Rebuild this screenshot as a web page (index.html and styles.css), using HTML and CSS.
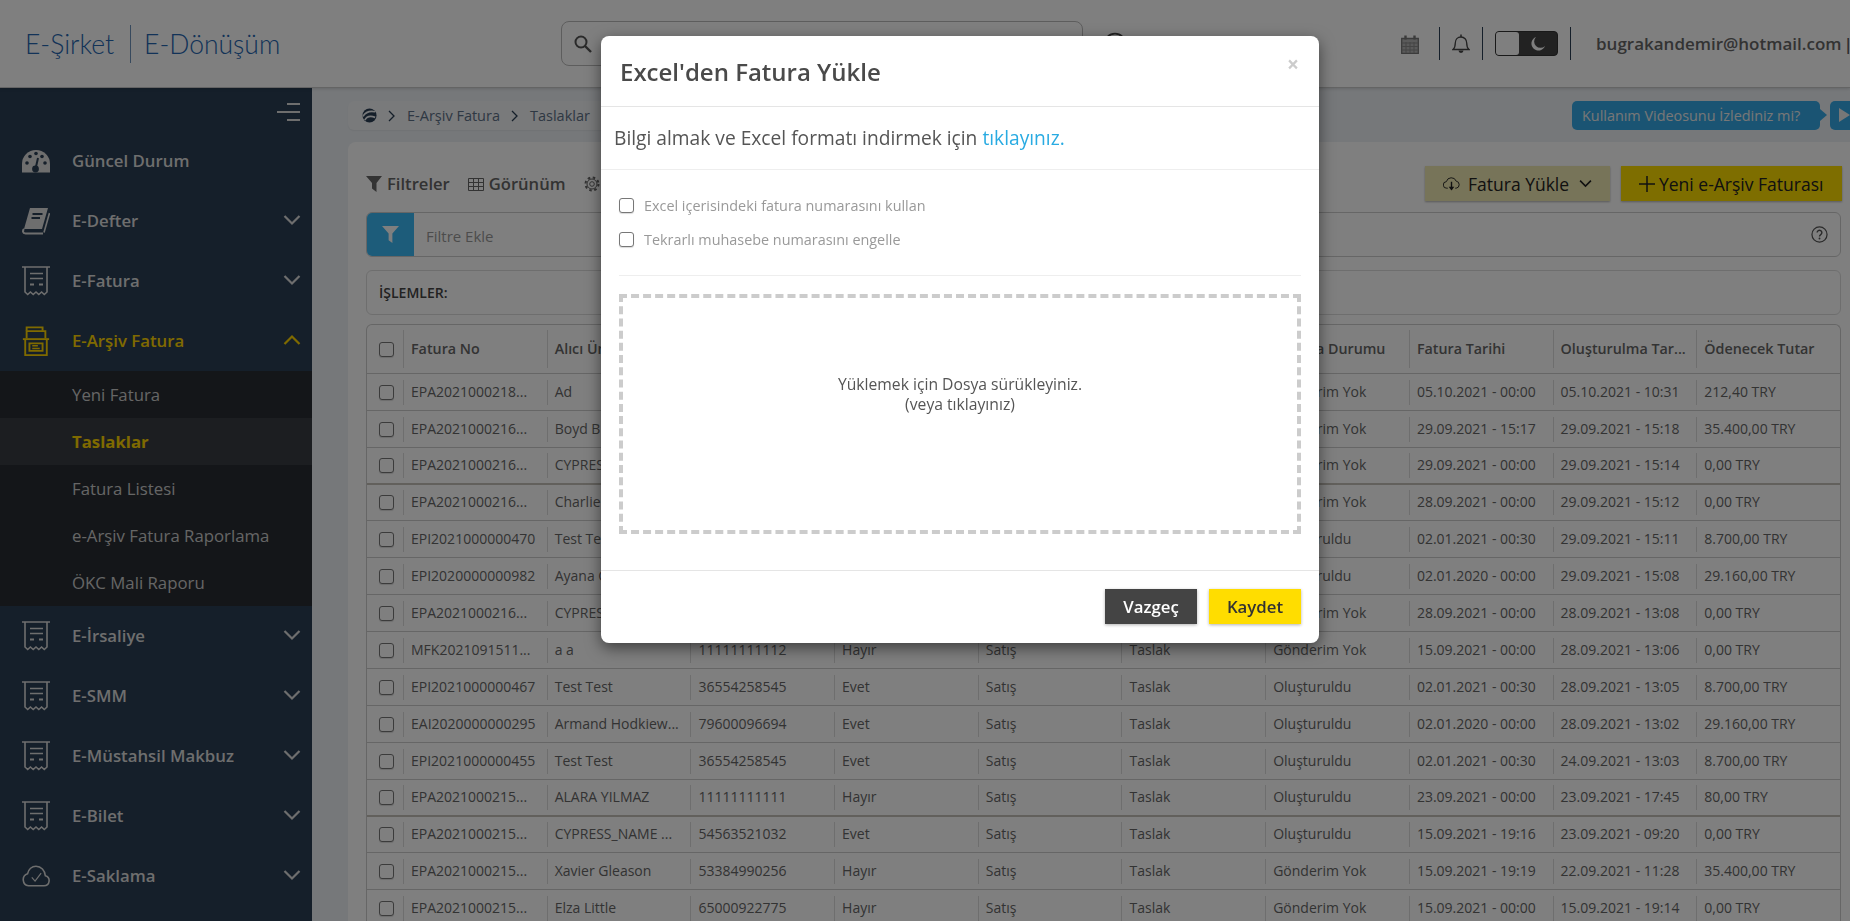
FILE: index.html
```html
<!DOCTYPE html>
<html lang="tr">
<head>
  <meta charset="UTF-8">
  <title>E-Arşiv Fatura - Taslaklar</title>
  <link rel="stylesheet" href="styles.css">
</head>
<body>

<svg class="defs" width="0" height="0">
  <symbol id="receipt" viewBox="0 0 28 30">
    <path d="M0 1h28M3 1v25l2.7 2.5 2.7-2.5 2.8 2.5 2.8-2.5 2.8 2.5 2.8-2.5 2.7 2.5 2.7-2.5V1" fill="none" stroke="currentColor" stroke-width="1.6"/>
    <path d="M8 7.500h13M8 12.500h13" fill="none" stroke="currentColor" stroke-width="1.6"/>
    <path d="M8 18.500h4M17 18.500h4" fill="none" stroke="currentColor" stroke-width="2"/>
  </symbol>
  <symbol id="chev-down" viewBox="0 0 18 12">
    <path d="M1.500 2l7.500 7.500L16.500 2" fill="none" stroke="currentColor" stroke-width="2.200"/>
  </symbol>
</svg>

<header class="topbar">
  <div class="logo">
    <span class="logo-part">E-Şirket</span>
    <span class="logo-part logo-second">E-Dönüşüm</span>
  </div>
  <div class="search">
    <svg class="search-icon" viewBox="0 0 20 20" width="20" height="20"><circle cx="8" cy="8" r="5.500" fill="none" stroke="currentColor" stroke-width="2"/><path d="M12 12l6 6" stroke="currentColor" stroke-width="2.400"/></svg>
  </div>
  <svg class="search-help" viewBox="0 0 22 22" width="24" height="24"><circle cx="11" cy="11" r="9.500" fill="none" stroke="currentColor" stroke-width="1.500"/></svg>
  <div class="top-right">
    <svg class="top-icon calendar" viewBox="0 0 18 20" width="18" height="20"><path d="M.7 4.500h16.600v14.800H.7z" fill="#b4b4b4" stroke="#777" stroke-width="1.300"/><path d="M4.500 1.500v4M13.500 1.500v4" stroke="#777" stroke-width="2.400"/><path d="M1 9h16M1 12.500h16M1 16h16M5 8v11M9 8v11M13 8v11" stroke="#8a8a8a" stroke-width="1"/></svg>
    <span class="top-sep"></span>
    <svg class="top-icon bell" viewBox="0 0 18 20" width="18" height="20"><path d="M1 15.500c1.800-1.500 2.300-3 2.300-6.500 0-3.400 2.300-6 5.700-6s5.700 2.600 5.700 6c0 3.500.5 5 2.300 6.500z" fill="none" stroke="currentColor" stroke-width="1.300"/><path d="M9 .5v2.500" stroke="currentColor" stroke-width="1.500"/><path d="M6.500 16.500a2.500 2.500 0 0 0 5 0z" fill="currentColor"/></svg>
    <span class="top-sep"></span>
    <div class="toggle">
      <span class="toggle-knob"></span>
      <span class="toggle-dark">
        <svg viewBox="0 0 16 16" width="16" height="16"><path d="M6 1a7 7 0 1 0 9 9 6 6 0 0 1-9-9z" fill="#fff"/></svg>
      </span>
    </div>
    <span class="top-sep top-sep-last"></span>
    <span class="user-mail">bugrakandemir@hotmail.com</span><span class="user-rest">|</span>
  </div>
</header>

<div class="main">
  <nav class="sidebar">
    <div class="side-toggle"><span></span><span></span><span></span></div>

    <a class="nav-item">
      <svg class="nav-icon" viewBox="0 0 28 24" width="28" height="24"><path d="M0 23.500V15a14 14 0 0 1 28 0v8.500z" fill="currentColor"/><g fill="#2a3e54"><circle cx="5" cy="14" r="1.800"/><circle cx="8" cy="7.500" r="1.800"/><circle cx="14" cy="4.500" r="1.800"/><circle cx="20" cy="7.500" r="1.800"/><circle cx="23" cy="14" r="1.800"/><circle cx="13.500" cy="20" r="3.400"/></g><path d="M13.500 20l2.500-11" stroke="#2a3e54" stroke-width="2"/></svg>
      <span>Güncel Durum</span>
    </a>
    <a class="nav-item">
      <svg class="nav-icon" viewBox="0 0 28 28" width="28" height="28"><path d="M8 1h18l-6 21H2z" fill="currentColor"/><path d="M10.500 7h10M9.500 11h8.500" stroke="#2a3e54" stroke-width="2"/><path d="M2 22c-1.500 1.500-1.500 4.500 1.500 4.500H21" fill="none" stroke="currentColor" stroke-width="2"/><path d="M27.500 6l-5.500 19.500" fill="none" stroke="currentColor" stroke-width="1.600"/></svg>
      <span>E-Defter</span>
      <svg class="nav-chev"><use href="#chev-down"/></svg>
    </a>
    <a class="nav-item">
      <svg class="nav-icon"><use href="#receipt"/></svg>
      <span>E-Fatura</span>
      <svg class="nav-chev"><use href="#chev-down"/></svg>
    </a>
    <a class="nav-item nav-open">
      <svg class="nav-icon" viewBox="0 0 28 32" width="28" height="32"><g fill="none" stroke="currentColor" stroke-width="2"><path d="M4 5V1.500h17V5"/><path d="M4 13V5.500h20V13"/><path d="M0 14h28"/><path d="M2.500 14v17h23V14"/><path d="M7 18.500h14v8H7z"/><path d="M10 21h6M10 24h8" stroke-width="1.500"/></g></svg>
      <span>E-Arşiv Fatura</span>
      <svg class="nav-chev chev-up"><use href="#chev-down"/></svg>
    </a>
    <div class="submenu">
      <a class="sub-item">Yeni Fatura</a>
      <a class="sub-item sub-active">Taslaklar</a>
      <a class="sub-item">Fatura Listesi</a>
      <a class="sub-item">e-Arşiv Fatura Raporlama</a>
      <a class="sub-item">ÖKC Mali Raporu</a>
    </div>
    <a class="nav-item">
      <svg class="nav-icon"><use href="#receipt"/></svg>
      <span>E-İrsaliye</span>
      <svg class="nav-chev"><use href="#chev-down"/></svg>
    </a>
    <a class="nav-item">
      <svg class="nav-icon"><use href="#receipt"/></svg>
      <span>E-SMM</span>
      <svg class="nav-chev"><use href="#chev-down"/></svg>
    </a>
    <a class="nav-item">
      <svg class="nav-icon"><use href="#receipt"/></svg>
      <span>E-Müstahsil Makbuz</span>
      <svg class="nav-chev"><use href="#chev-down"/></svg>
    </a>
    <a class="nav-item">
      <svg class="nav-icon"><use href="#receipt"/></svg>
      <span>E-Bilet</span>
      <svg class="nav-chev"><use href="#chev-down"/></svg>
    </a>
    <a class="nav-item">
      <svg class="nav-icon" viewBox="0 0 30 24" width="30" height="24"><path d="M7 22.500h16.500a5.500 5.500 0 0 0 1.500-10.800C24.500 6 20.500 1.500 15 1.500 10.500 1.500 7 5 6 9.500a6.700 6.700 0 0 0 1 13z" fill="none" stroke="currentColor" stroke-width="1.700"/><path d="M10.500 13.500l3.500 4 6.500-8.500" fill="none" stroke="currentColor" stroke-width="1.300"/></svg>
      <span>E-Saklama</span>
      <svg class="nav-chev"><use href="#chev-down"/></svg>
    </a>
  </nav>

  <main class="content">
    <div class="crumb-row">
      <div class="crumbs">
        <svg class="crumb-logo" viewBox="0 0 16 16" width="15" height="15"><circle cx="8" cy="8" r="7.500" fill="currentColor"/><path d="M1 9c3-5 8-6 13-5M3 13c2-4 6-5 11-3" fill="none" stroke="#f2f4f7" stroke-width="1.800"/></svg>
        <svg class="crumb-chev" viewBox="0 0 8 12" width="8" height="12"><path d="M1 1l5 5-5 5" fill="none" stroke="currentColor" stroke-width="1.300"/></svg>
        <span>E-Arşiv Fatura</span>
        <svg class="crumb-chev" viewBox="0 0 8 12" width="8" height="12"><path d="M1 1l5 5-5 5" fill="none" stroke="currentColor" stroke-width="1.300"/></svg>
        <span>Taslaklar</span>
      </div>
      <div class="video-hint">
        <span class="video-text">Kullanım Videosunu İzlediniz mi?</span>
        <span class="video-play"></span>
      </div>
    </div>

    <section class="card">
      <div class="toolbar">
        <div class="tool">
          <svg viewBox="0 0 16 16" width="16" height="16"><path d="M0 0h16l-5.500 7v9l-4.500-3.500V7z" fill="currentColor"/></svg>
          <span>Filtreler</span>
        </div>
        <div class="tool">
          <svg viewBox="0 0 16 14" width="16" height="14"><path d="M.5 1.500h15v12H.5zM.5 5.500h15M.5 9.500h15M5.500 1.500v12M10.500 1.500v12" fill="none" stroke="currentColor"/></svg>
          <span>Görünüm</span>
        </div>
        <div class="tool">
          <svg viewBox="0 0 16 16" width="16" height="16"><circle cx="8" cy="8" r="2.300" fill="none" stroke="currentColor"/><circle cx="8" cy="8" r="5" fill="none" stroke="currentColor"/><circle cx="8" cy="8" r="6.500" fill="none" stroke="currentColor" stroke-width="2" stroke-dasharray="2.550 2.550"/></svg>
        </div>
        <div class="tool-buttons">
          <a class="btn-upload">
            <svg viewBox="0 0 18 16" width="17" height="15"><path d="M5 13H4a3.500 3.500 0 0 1-.5-7A5.500 5.500 0 0 1 14 5.500a3.800 3.800 0 0 1 0 7.500h-1" fill="none" stroke="currentColor"/><path d="M9 6v8" stroke="currentColor" stroke-width="1.500"/><path d="M6 11.500h6L9 15.500z" fill="currentColor"/></svg>
            <span>Fatura Yükle</span>
            <svg class="upload-chev"><use href="#chev-down"/></svg>
          </a>
          <a class="btn-new">
            <svg viewBox="0 0 16 16" width="16" height="16"><path d="M8 0v16M0 8h16" stroke="currentColor" stroke-width="1.500"/></svg>
            <span>Yeni e-Arşiv Faturası</span>
          </a>
        </div>
      </div>

      <div class="filter-bar">
        <span class="filter-btn">
          <svg viewBox="0 0 18 20" width="17" height="19"><path d="M0 1h18L11 9v10l-4-3V9z" fill="#fff"/></svg>
        </span>
        <span class="filter-hint">Filtre Ekle</span>
        <svg class="filter-help" viewBox="0 0 18 18" width="17" height="17"><circle cx="9" cy="9" r="8" fill="none" stroke="currentColor" stroke-width="1.300"/><path d="M6.500 7a2.500 2.500 0 1 1 3.800 2.100c-.9.600-1.300 1-1.300 2" fill="none" stroke="currentColor" stroke-width="1.500"/><circle cx="9" cy="13.300" r="1" fill="currentColor"/></svg>
      </div>

      <div class="actions-bar">İŞLEMLER:</div>

      <div class="grid">
        <div class="row row-head">
          <div class="cell-check"><input type="checkbox"></div>
          <div class="cell">Fatura No</div><div class="cell">Alıcı Ünvanı</div><div class="cell">VKN/TCKN</div><div class="cell">E-Fatura</div><div class="cell">Tipi</div><div class="cell">Durum</div><div class="cell">E-Posta Durumu</div><div class="cell">Fatura Tarihi</div><div class="cell">Oluşturulma Tar...</div><div class="cell">Ödenecek Tutar</div>
        </div>
        <div class="row">
          <div class="cell-check"><input type="checkbox"></div>
          <div class="cell">EPA2021000218...</div><div class="cell">Ad</div><div class="cell">11111111111</div><div class="cell">Hayır</div><div class="cell">Satış</div><div class="cell">Taslak</div><div class="cell">Gönderim Yok</div><div class="cell">05.10.2021 - 00:00</div><div class="cell">05.10.2021 - 10:31</div><div class="cell">212,40 TRY</div>
        </div>
        <div class="row">
          <div class="cell-check"><input type="checkbox"></div>
          <div class="cell">EPA2021000216...</div><div class="cell">Boyd Brown</div><div class="cell">53384990256</div><div class="cell">Hayır</div><div class="cell">Satış</div><div class="cell">Taslak</div><div class="cell">Gönderim Yok</div><div class="cell">29.09.2021 - 15:17</div><div class="cell">29.09.2021 - 15:18</div><div class="cell">35.400,00 TRY</div>
        </div>
        <div class="row row-thick">
          <div class="cell-check"><input type="checkbox"></div>
          <div class="cell">EPA2021000216...</div><div class="cell">CYPRESS_NAME ...</div><div class="cell">54563521032</div><div class="cell">Evet</div><div class="cell">Satış</div><div class="cell">Taslak</div><div class="cell">Gönderim Yok</div><div class="cell">29.09.2021 - 00:00</div><div class="cell">29.09.2021 - 15:14</div><div class="cell">0,00 TRY</div>
        </div>
        <div class="row">
          <div class="cell-check"><input type="checkbox"></div>
          <div class="cell">EPA2021000216...</div><div class="cell">Charlie Hills</div><div class="cell">65000922775</div><div class="cell">Hayır</div><div class="cell">Satış</div><div class="cell">Taslak</div><div class="cell">Gönderim Yok</div><div class="cell">28.09.2021 - 00:00</div><div class="cell">29.09.2021 - 15:12</div><div class="cell">0,00 TRY</div>
        </div>
        <div class="row">
          <div class="cell-check"><input type="checkbox"></div>
          <div class="cell">EPI2021000000470</div><div class="cell">Test Test</div><div class="cell">36554258545</div><div class="cell">Evet</div><div class="cell">Satış</div><div class="cell">Taslak</div><div class="cell">Oluşturuldu</div><div class="cell">02.01.2021 - 00:30</div><div class="cell">29.09.2021 - 15:11</div><div class="cell">8.700,00 TRY</div>
        </div>
        <div class="row">
          <div class="cell-check"><input type="checkbox"></div>
          <div class="cell">EPI2020000000982</div><div class="cell">Ayana Orn</div><div class="cell">79600096694</div><div class="cell">Evet</div><div class="cell">Satış</div><div class="cell">Taslak</div><div class="cell">Oluşturuldu</div><div class="cell">02.01.2020 - 00:00</div><div class="cell">29.09.2021 - 15:08</div><div class="cell">29.160,00 TRY</div>
        </div>
        <div class="row">
          <div class="cell-check"><input type="checkbox"></div>
          <div class="cell">EPA2021000216...</div><div class="cell">CYPRESS_NAME ...</div><div class="cell">54563521032</div><div class="cell">Evet</div><div class="cell">Satış</div><div class="cell">Taslak</div><div class="cell">Gönderim Yok</div><div class="cell">28.09.2021 - 00:00</div><div class="cell">28.09.2021 - 13:08</div><div class="cell">0,00 TRY</div>
        </div>
        <div class="row">
          <div class="cell-check"><input type="checkbox"></div>
          <div class="cell">MFK2021091511...</div><div class="cell">a a</div><div class="cell">11111111112</div><div class="cell">Hayır</div><div class="cell">Satış</div><div class="cell">Taslak</div><div class="cell">Gönderim Yok</div><div class="cell">15.09.2021 - 00:00</div><div class="cell">28.09.2021 - 13:06</div><div class="cell">0,00 TRY</div>
        </div>
        <div class="row">
          <div class="cell-check"><input type="checkbox"></div>
          <div class="cell">EPI2021000000467</div><div class="cell">Test Test</div><div class="cell">36554258545</div><div class="cell">Evet</div><div class="cell">Satış</div><div class="cell">Taslak</div><div class="cell">Oluşturuldu</div><div class="cell">02.01.2021 - 00:30</div><div class="cell">28.09.2021 - 13:05</div><div class="cell">8.700,00 TRY</div>
        </div>
        <div class="row">
          <div class="cell-check"><input type="checkbox"></div>
          <div class="cell">EAI2020000000295</div><div class="cell">Armand Hodkiew...</div><div class="cell">79600096694</div><div class="cell">Evet</div><div class="cell">Satış</div><div class="cell">Taslak</div><div class="cell">Oluşturuldu</div><div class="cell">02.01.2020 - 00:00</div><div class="cell">28.09.2021 - 13:02</div><div class="cell">29.160,00 TRY</div>
        </div>
        <div class="row">
          <div class="cell-check"><input type="checkbox"></div>
          <div class="cell">EPI2021000000455</div><div class="cell">Test Test</div><div class="cell">36554258545</div><div class="cell">Evet</div><div class="cell">Satış</div><div class="cell">Taslak</div><div class="cell">Oluşturuldu</div><div class="cell">02.01.2021 - 00:30</div><div class="cell">24.09.2021 - 13:03</div><div class="cell">8.700,00 TRY</div>
        </div>
        <div class="row row-thick">
          <div class="cell-check"><input type="checkbox"></div>
          <div class="cell">EPA2021000215...</div><div class="cell">ALARA YILMAZ</div><div class="cell">11111111111</div><div class="cell">Hayır</div><div class="cell">Satış</div><div class="cell">Taslak</div><div class="cell">Oluşturuldu</div><div class="cell">23.09.2021 - 00:00</div><div class="cell">23.09.2021 - 17:45</div><div class="cell">80,00 TRY</div>
        </div>
        <div class="row">
          <div class="cell-check"><input type="checkbox"></div>
          <div class="cell">EPA2021000215...</div><div class="cell">CYPRESS_NAME ...</div><div class="cell">54563521032</div><div class="cell">Evet</div><div class="cell">Satış</div><div class="cell">Taslak</div><div class="cell">Oluşturuldu</div><div class="cell">15.09.2021 - 19:16</div><div class="cell">23.09.2021 - 09:20</div><div class="cell">0,00 TRY</div>
        </div>
        <div class="row">
          <div class="cell-check"><input type="checkbox"></div>
          <div class="cell">EPA2021000215...</div><div class="cell">Xavier Gleason</div><div class="cell">53384990256</div><div class="cell">Hayır</div><div class="cell">Satış</div><div class="cell">Taslak</div><div class="cell">Gönderim Yok</div><div class="cell">15.09.2021 - 19:19</div><div class="cell">22.09.2021 - 11:28</div><div class="cell">35.400,00 TRY</div>
        </div>
        <div class="row">
          <div class="cell-check"><input type="checkbox"></div>
          <div class="cell">EPA2021000215...</div><div class="cell">Elza Little</div><div class="cell">65000922775</div><div class="cell">Hayır</div><div class="cell">Satış</div><div class="cell">Taslak</div><div class="cell">Gönderim Yok</div><div class="cell">15.09.2021 - 00:00</div><div class="cell">15.09.2021 - 19:14</div><div class="cell">0,00 TRY</div>
        </div>
      </div>
    </section>
  </main>
</div>

<div class="backdrop"></div>

<div class="modal">
  <div class="modal-head">
    <h2>Excel'den Fatura Yükle</h2>
    <span class="modal-close">×</span>
  </div>
  <div class="modal-info">Bilgi almak ve Excel formatı indirmek için <a class="link">tıklayınız.</a></div>
  <div class="modal-body">
    <label class="check-row"><input type="checkbox"> Excel içerisindeki fatura numarasını kullan</label>
    <label class="check-row"><input type="checkbox"> Tekrarlı muhasebe numarasını engelle</label>
    <hr class="modal-rule">
    <div class="dropzone">
      <div>Yüklemek için Dosya sürükleyiniz.</div>
      <div>(veya tıklayınız)</div>
    </div>
  </div>
  <div class="modal-foot">
    <button class="btn-cancel">Vazgeç</button>
    <button class="btn-save">Kaydet</button>
  </div>
</div>

</body>
</html>
```

FILE: styles.css
```css
html, body {
  margin: 0;
  padding: 0;
  height: 921px;
  overflow: hidden;
}
body {
  font-family: "Open Sans", "Liberation Sans", sans-serif;
  font-size: 14px;
  color: #666;
  background: #edf1f5;
}
.defs {
  position: absolute;
}
input[type=checkbox] {
  appearance: none;
  -webkit-appearance: none;
  width: 15px;
  height: 15px;
  margin: 0;
  flex: none;
  background: #fff;
  border: 1px solid #777;
  border-radius: 3px;
  box-shadow: 0 1px 1px rgba(0,0,0,.15);
}

/* top bar */
.topbar {
  height: 88px;
  box-sizing: border-box;
  display: flex;
  align-items: center;
  padding-left: 25px;
  background: #fff;
  border-bottom: 1px solid #c9c9c9;
  box-shadow: 0 1px 3px rgba(0,0,0,.15);
  position: relative;
  z-index: 2;
}
.logo {
  width: 536px;
  display: flex;
  align-items: center;
  font-family: "Lato", sans-serif;
  font-weight: 300;
  font-size: 26.5px;
  color: #2566b0;
}
.logo-second {
  margin-left: 16px;
  padding-left: 13px;
  border-left: 1px solid #6f93ba;
  line-height: 38px;
}
.search {
  width: 522px;
  height: 45px;
  box-sizing: border-box;
  border: 1px solid #bbb;
  border-radius: 8px;
  display: flex;
  align-items: center;
  padding-left: 11px;
  color: #555;
}
.search-help {
  margin-left: 20px;
  color: #444;
}
.top-right {
  margin-left: auto;
  display: flex;
  align-items: center;
  white-space: nowrap;
  overflow: hidden;
  width: 449px;
  color: #555;
}
.top-right > * {
  flex: none;
}
.top-sep {
  width: 1px;
  height: 33px;
  background: #2a3e54;
  margin: 0 12px;
}
.calendar {
  margin-right: 8px;
}
.bell {
  color: #444;
}
.toggle {
  width: 63px;
  height: 25px;
  box-sizing: border-box;
  display: flex;
  border: 1px solid #333;
  border-radius: 4px;
  background: #444;
}
.toggle-knob {
  width: 23px;
  background: #fff;
  border-radius: 3px;
}
.toggle-dark {
  flex: 1;
  display: flex;
  align-items: center;
  justify-content: center;
}
.top-sep-last {
  margin: 0 25px 0 12px;
}
.user-mail {
  font-size: 17px;
  font-weight: 600;
  color: #666;
}
.user-rest {
  font-size: 17px;
  font-weight: 600;
  margin-left: 2px;
}

/* layout */
.main {
  display: flex;
  height: 833px;
}

/* sidebar */
.sidebar {
  width: 312px;
  flex: none;
  background: #2a3e54;
  color: #ddd;
}
.side-toggle {
  height: 43px;
  box-sizing: border-box;
  padding: 15px 12px 0 0;
  display: flex;
  flex-direction: column;
  align-items: flex-end;
  gap: 6px;
}
.side-toggle span {
  display: block;
  height: 2px;
  width: 13px;
  background: #ddd;
}
.side-toggle span:nth-child(2) {
  width: 23px;
}
.nav-item {
  height: 60px;
  display: flex;
  align-items: center;
  padding: 0 11px 0 22px;
  font-size: 16.8px;
  font-weight: 600;
}
.nav-item span {
  padding-bottom: 2px;
}
.nav-icon {
  width: 28px;
  height: 30px;
  margin-right: 22px;
  flex: none;
}
.nav-chev {
  width: 18px;
  height: 12px;
  margin-left: auto;
  margin-top: -2px;
}
.chev-up {
  transform: rotate(180deg);
}
.nav-open {
  color: #ffd500;
}
.submenu {
  background: #282c32;
}
.sub-item {
  display: block;
  height: 47px;
  line-height: 47px;
  padding-left: 72px;
  font-size: 16.8px;
  color: #ccc;
}
.sub-active {
  background: #383c42;
  color: #ffd500;
  font-weight: 700;
}

/* content */
.content {
  flex: 1;
  min-width: 0;
  padding: 13px 0 0 36px;
}
.crumb-row {
  height: 29px;
  display: flex;
  justify-content: space-between;
}
.crumbs {
  width: 300px;
  display: flex;
  align-items: center;
  gap: 11px;
  padding-left: 14px;
  background: #f2f4f7;
  border-radius: 6px;
  font-size: 14.5px;
  color: #5d7086;
  box-shadow: 0 1px 2px rgba(0,0,0,.06);
}
.crumb-logo {
  color: #2a3e54;
}
.crumb-chev {
  flex: none;
  color: #2a3e54;
}
.video-hint {
  display: flex;
  width: 278px;
  gap: 10px;
}
.video-text {
  width: 248px;
  box-sizing: border-box;
  padding-left: 10px;
  line-height: 29px;
  font-size: 14.4px;
  background: #34a9e6;
  color: #eee;
  border-radius: 5px;
  position: relative;
}
.video-text::after {
  content: "";
  position: absolute;
  right: -7px;
  top: 8px;
  border-left: 7px solid #34a9e6;
  border-top: 6px solid transparent;
  border-bottom: 6px solid transparent;
}
.video-play {
  flex: 1;
  background: #34a9e6;
  border-radius: 5px 0 0 5px;
  position: relative;
}
.video-play::after {
  content: "";
  position: absolute;
  left: 9px;
  top: 7px;
  border-left: 11px solid #eee;
  border-top: 7px solid transparent;
  border-bottom: 7px solid transparent;
}
.card {
  margin-top: 12px;
  background: #fff;
  border-radius: 8px 0 0 0;
  padding: 24px 9px 0 18px;
  height: 800px;
  overflow: hidden;
}
.toolbar {
  height: 35px;
  display: flex;
  align-items: center;
  gap: 18px;
}
.tool {
  display: flex;
  align-items: center;
  gap: 5px;
  font-size: 16.6px;
  font-weight: 600;
  color: #666;
}
.tool-buttons {
  margin-left: auto;
  display: flex;
  gap: 11px;
  margin-right: -1px;
  font-size: 17.5px;
  color: #222;
}
.btn-upload, .btn-new {
  height: 35px;
  display: flex;
  align-items: center;
  box-shadow: 0 1px 2px rgba(0,0,0,.3);
}
.btn-upload {
  width: 185px;
  box-sizing: border-box;
  padding-left: 18px;
  gap: 8px;
  background: #efe9b2;
}
.upload-chev {
  width: 13px;
  height: 9px;
  margin-left: 2px;
}
.btn-new {
  width: 221px;
  box-sizing: border-box;
  padding-left: 18px;
  gap: 4px;
  background: #fcdc00;
}
.filter-bar {
  margin-top: 11px;
  height: 45px;
  box-sizing: border-box;
  border: 1px solid #ccc;
  border-radius: 6px;
  display: flex;
  align-items: center;
  overflow: hidden;
}
.filter-btn {
  width: 47px;
  height: 100%;
  background: #3ab8f4;
  display: flex;
  align-items: center;
  justify-content: center;
}
.filter-hint {
  margin-left: 12px;
  margin-top: 2px;
  color: #999;
  font-size: 15px;
}
.filter-help {
  margin-left: auto;
  margin-right: 12px;
  color: #555;
}
.actions-bar {
  margin-top: 13px;
  height: 45px;
  box-sizing: border-box;
  border: 1px solid #ddd;
  border-radius: 6px;
  padding-left: 12px;
  line-height: 43px;
  font-size: 14px;
  font-weight: 600;
  color: #444;
}

/* table */
.grid {
  margin-top: 9px;
  border: 1px solid #ccc;
  border-bottom: 0;
  border-radius: 6px 6px 0 0;
}
.row {
  height: 37px;
  box-sizing: border-box;
  display: grid;
  grid-template-columns: 36px repeat(10, 1fr);
  align-items: center;
  border-bottom: 1px solid #ccc;
}
.row-head {
  height: 49px;
  font-size: 14.3px;
  font-weight: 600;
  color: #666;
}
.row-thick {
  border-bottom: 2px solid #c4c0b8;
}
.row-thick + .row {
  height: 36px;
}
.cell-check {
  display: flex;
  justify-content: flex-end;
  padding-right: 9px;
}
.cell {
  height: 25px;
  line-height: 23px;
  padding: 0 4px 0 7px;
  border-left: 1px solid #ddd;
  white-space: nowrap;
  overflow: hidden;
}
.row-head .cell {
  height: 38px;
  line-height: 38px;
}

/* modal */
.backdrop {
  position: fixed;
  left: 0;
  top: 0;
  right: 0;
  bottom: 0;
  z-index: 10;
  background: rgba(0,0,0,.5);
}
.modal {
  position: absolute;
  left: 601px;
  top: 36px;
  width: 718px;
  z-index: 11;
  background: #fff;
  border-radius: 8px;
  box-shadow: 0 5px 15px rgba(0,0,0,.5);
}
.modal-head {
  height: 71px;
  box-sizing: border-box;
  border-bottom: 1px solid #e5e5e5;
  padding: 0 20px 0 19px;
  display: flex;
  justify-content: space-between;
  align-items: center;
}
.modal-head h2 {
  margin: 0;
  font-size: 24px;
  font-weight: 600;
  color: #4a4a4a;
}
.modal-close {
  font-size: 21px;
  font-weight: 700;
  color: #ccc;
  margin-top: -15px;
}
.modal-info {
  height: 63px;
  box-sizing: border-box;
  border-bottom: 1px solid #eee;
  padding-left: 13px;
  line-height: 62px;
  font-size: 19.2px;
  color: #555;
}
.link {
  color: #29abe2;
}
.modal-body {
  padding: 23px 18px 36px;
}
.check-row {
  display: flex;
  align-items: center;
  gap: 10px;
  height: 24px;
  margin-bottom: 10px;
  font-size: 14.4px;
  color: #999;
}
.modal-rule {
  border: 0;
  border-top: 1px solid #eee;
  margin: 24px 0 18px;
}
.dropzone {
  height: 240px;
  box-sizing: border-box;
  border: 4px dashed #ccc;
  display: flex;
  flex-direction: column;
  justify-content: center;
  align-items: center;
  font-size: 15.7px;
  line-height: 20px;
  color: #555;
  padding-bottom: 41px;
}
.modal-foot {
  border-top: 1px solid #e5e5e5;
  padding: 18px 18px 19px;
  display: flex;
  justify-content: flex-end;
  gap: 12px;
}
.modal-foot button {
  width: 92px;
  height: 35px;
  border: 0;
  font-family: inherit;
  font-size: 16.8px;
  font-weight: 600;
  box-shadow: 0 1px 3px rgba(0,0,0,.3);
}
.btn-cancel {
  background: #444;
  color: #fff;
}
.btn-save {
  background: #ffdd00;
  color: #333;
}
```
